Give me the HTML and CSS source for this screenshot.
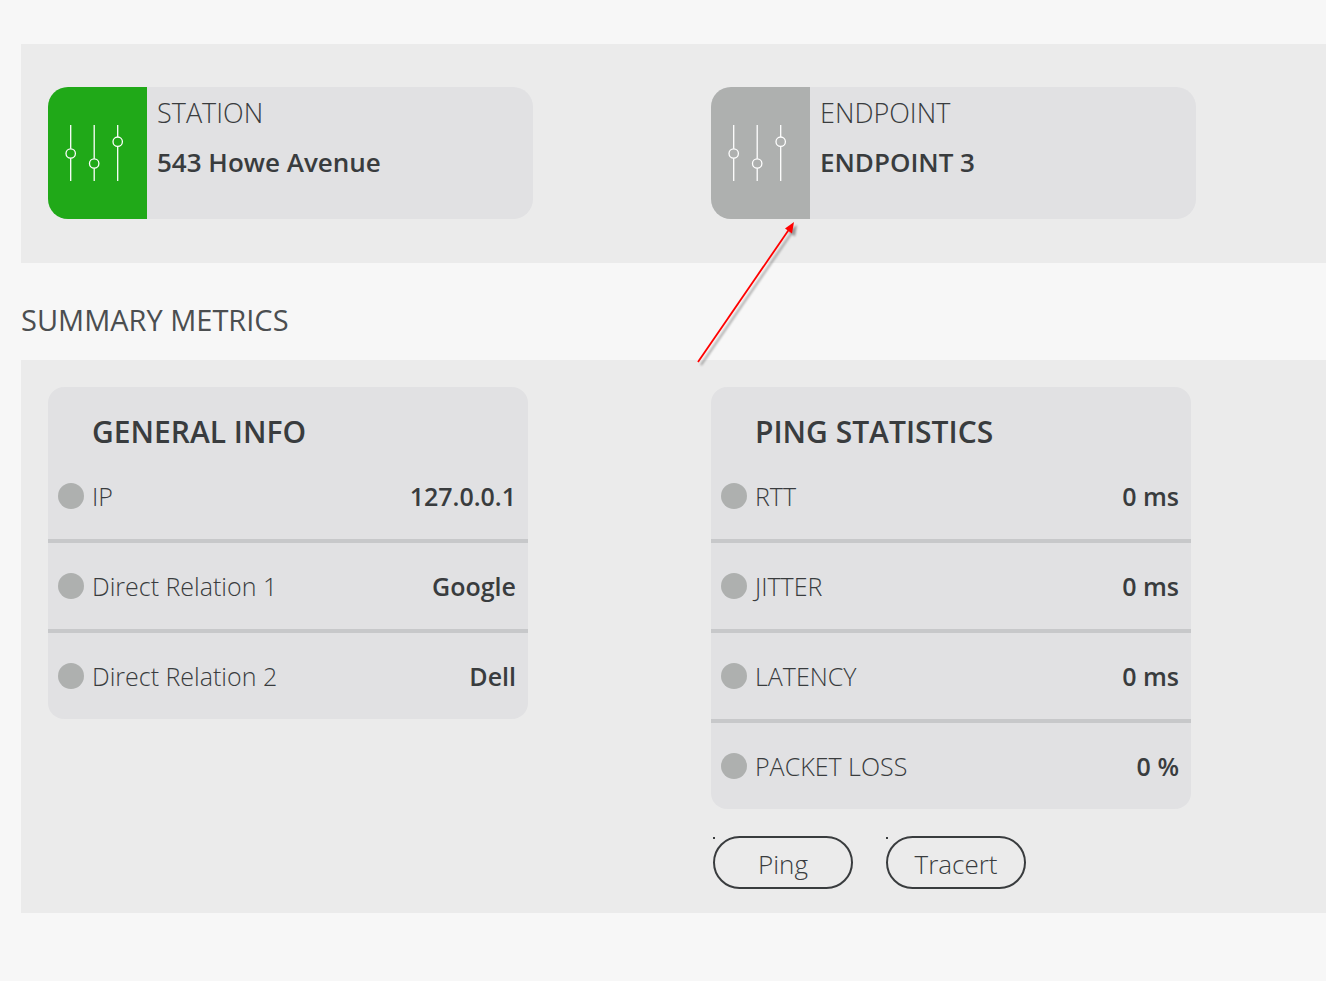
FILE: index.html
```html
<!DOCTYPE html>
<html lang="en">
<head>
<meta charset="utf-8">
<meta name="viewport" content="width=device-width, initial-scale=1">
<title>Summary Metrics</title>
<link rel="stylesheet" href="styles.css">
</head>
<body>
<svg width="0" height="0" class="defs" aria-hidden="true">
  <symbol id="sliders" viewBox="0 0 60 58">
    <g fill="none" stroke="#fff" stroke-width="1.3">
      <path d="M6.700 1v23.800M6.700 34.200V57M30.200 1v33.800M30.200 44.200V57M53.700 1v12M53.700 22.400V57"/>
      <circle cx="6.700" cy="29.500" r="4.700"/>
      <circle cx="30.200" cy="39.500" r="4.700"/>
      <circle cx="53.700" cy="17.700" r="4.700"/>
    </g>
  </symbol>
</svg>
<main class="page">
  <section class="panel devices">
    <article class="device">
      <div class="device-icon online"><svg class="sliders" aria-hidden="true"><use href="#sliders"/></svg></div>
      <div class="device-text">
        <p class="device-kind">STATION</p>
        <p class="device-name">543 Howe Avenue</p>
      </div>
    </article>
    <article class="device">
      <div class="device-icon"><svg class="sliders" aria-hidden="true"><use href="#sliders"/></svg></div>
      <div class="device-text">
        <p class="device-kind">ENDPOINT</p>
        <p class="device-name">ENDPOINT 3</p>
      </div>
    </article>
  </section>

  <h1 class="heading">SUMMARY METRICS</h1>

  <section class="panel metrics">
    <article class="card">
      <h2 class="card-title">GENERAL INFO</h2>
      <dl class="rows">
        <div class="row"><dt class="label">IP</dt><dd class="value">127.0.0.1</dd></div>
        <div class="row"><dt class="label">Direct Relation 1</dt><dd class="value">Google</dd></div>
        <div class="row"><dt class="label">Direct Relation 2</dt><dd class="value">Dell</dd></div>
      </dl>
    </article>
    <div class="column">
      <article class="card">
        <h2 class="card-title">PING STATISTICS</h2>
        <dl class="rows">
          <div class="row"><dt class="label">RTT</dt><dd class="value">0 ms</dd></div>
          <div class="row"><dt class="label">JITTER</dt><dd class="value">0 ms</dd></div>
          <div class="row"><dt class="label">LATENCY</dt><dd class="value">0 ms</dd></div>
          <div class="row"><dt class="label">PACKET LOSS</dt><dd class="value">0 %</dd></div>
        </dl>
      </article>
      <div class="actions">
        <button type="button" class="action">Ping</button>
        <button type="button" class="action">Tracert</button>
      </div>
    </div>
  </section>

  <svg class="arrow" viewBox="0 0 110 155" aria-hidden="true">
    <path d="M8 147L100 13" fill="none" stroke="#f00" stroke-width="1.800"/>
    <path d="M104 7L102 18.500L95 13.500Z" fill="#f00"/>
  </svg>
</main>
</body>
</html>
```
FILE: styles.css
```css
* {
  box-sizing: border-box;
}

body {
  margin: 0;
  background: #f7f7f7;
  color: #393c3e;
  font-family: "Open Sans", "Noto Sans", sans-serif;
}

p, h1, h2, dl, dd {
  margin: 0;
}

.defs {
  position: absolute;
}

.page {
  position: relative;
  padding: 44px 0 68px 21px;
}

.panel {
  display: grid;
  grid-template-columns: 50vw 1fr;
  align-items: start;
  padding-left: 27px;
  background: #ebebeb;
}

.devices {
  padding-top: 43px;
  padding-bottom: 44px;
}

.device {
  display: flex;
  width: 100%;
  max-width: 485px;
  min-height: 132px;
  border-radius: 20px;
  background: #e1e1e3;
  overflow: hidden;
}

.device-icon {
  display: flex;
  flex: none;
  align-items: center;
  width: 99px;
  padding-left: 16px;
  background: #aeb0af;
}

.device-icon.online {
  background: #20a918;
}

.sliders {
  width: 60px;
  height: 58px;
}

.device-text {
  padding: 6px 10px;
}

.device-kind {
  font-size: 27px;
  font-weight: 350;
  line-height: 40px;
}

.device-name {
  margin-top: 9px;
  font-size: 26px;
  font-weight: 600;
  line-height: 40px;
}

.heading {
  padding: 37px 0 20px;
  color: #4b4e50;
  font-size: 29px;
  font-weight: 400;
  line-height: 40px;
}

.metrics {
  padding-top: 27px;
  padding-bottom: 24px;
}

.card {
  width: 100%;
  max-width: 480px;
  border-radius: 16px;
  background: #e1e1e3;
}

.card-title {
  padding: 25px 44px 1px;
  font-size: 30px;
  font-weight: 600;
  line-height: 40px;
}

.row {
  display: flex;
  align-items: center;
  height: 90px;
  padding: 0 12px 0 10px;
  border-bottom: 4px solid #c7c8ca;
}

.row:last-child {
  height: 86px;
  border-bottom: 0;
}

.label {
  display: flex;
  align-items: center;
  gap: 8px;
  font-size: 25px;
  font-weight: 350;
}

.label::before {
  content: "";
  width: 26px;
  height: 26px;
  border-radius: 50%;
  background: #aeb0af;
}

.value {
  margin-left: auto;
  font-size: 25px;
  font-weight: 600;
}

.actions {
  display: flex;
  gap: 33px;
  padding: 27px 2px 0;
}

.action {
  position: relative;
  width: 140px;
  height: 53px;
  padding: 2px 0 0;
  border: 2px solid #393c3e;
  border-radius: 27px;
  background: transparent;
  color: inherit;
  font: 350 26px "Open Sans", "Noto Sans", sans-serif;
}

.action::before {
  content: "";
  position: absolute;
  top: -1px;
  left: -2px;
  width: 2px;
  height: 2px;
  background: #393c3e;
}

.arrow {
  position: absolute;
  top: 215px;
  left: 690px;
  width: 110px;
  height: 155px;
  filter: drop-shadow(3px 3px 1px rgba(0, 0, 0, 0.35));
  pointer-events: none;
}
```
